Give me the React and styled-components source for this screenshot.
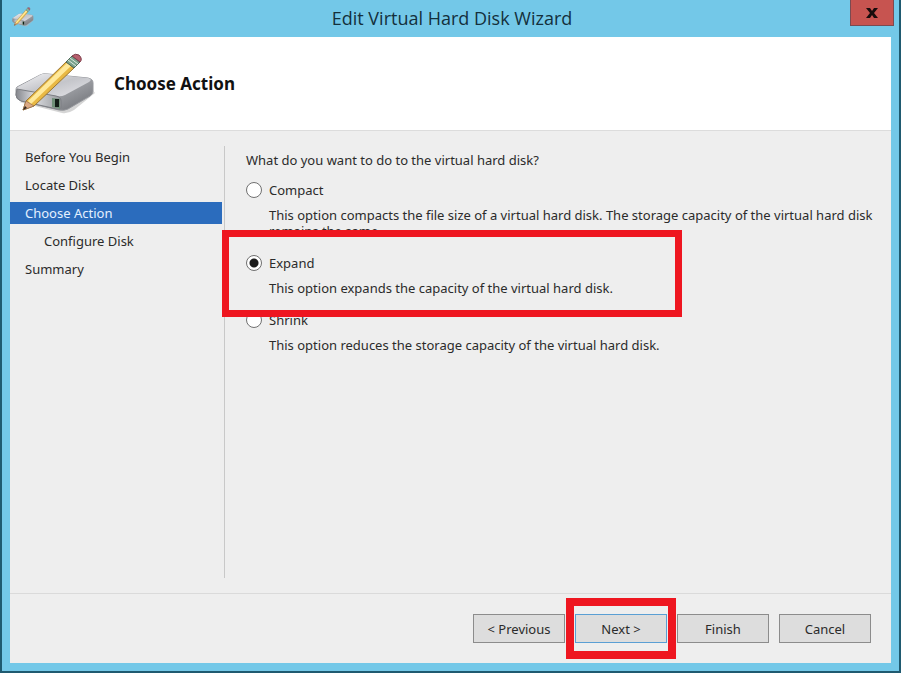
import React, { useState } from 'react';
import styled, { createGlobalStyle } from 'styled-components';

const GlobalStyle = createGlobalStyle`
  *, *::before, *::after {
    box-sizing: border-box;
  }

  body {
    margin: 0;
    font-family: "Noto Sans", sans-serif;
    font-size: 13px;
    line-height: 16px;
    color: #2b2b2b;
  }
`;

const Window = styled.div`
  display: flex;
  flex-direction: column;
  min-height: 100vh;
  padding: 0 8px 8px;
  background: #73c8e8;
  border: solid #1f5a70;
  border-width: 0 2px 2px;
`;

const TitleBar = styled.header`
  display: grid;
  grid-template-columns: 44px 1fr 44px;
  align-items: start;
  height: 37px;
  margin-right: -3px;
`;

const TitleIcon = styled.span`
  padding: 7px 0 0 2px;
  line-height: 0;
`;

const WindowTitle = styled.h1`
  margin: 0;
  font-family: "Open Sans", "Noto Sans", sans-serif;
  font-size: 18px;
  font-weight: 400;
  line-height: 36px;
  text-align: center;
  color: #14303c;
`;

const CloseButton = styled.button`
  display: flex;
  align-items: center;
  justify-content: center;
  width: 44px;
  height: 26px;
  padding: 0;
  background: #c75450;
  border: 1px solid #7b4a50;
  border-top: none;
`;

const Client = styled.div`
  display: flex;
  flex: 1;
  flex-direction: column;
  background: #eeeeee;
`;

const Banner = styled.div`
  display: flex;
  align-items: center;
  gap: 18px;
  height: 94px;
  padding-left: 4px;
  background: #fff;
  border-bottom: 1px solid #dcdcdc;
`;

const BannerTitle = styled.h2`
  margin: 0;
  font-family: "Noto Sans", sans-serif;
  font-size: 17px;
  font-weight: 700;
  line-height: 24px;
  color: #111;
`;

const Body = styled.div`
  display: flex;
  flex: 1;
  padding: 15px 0;
`;

const Steps = styled.nav`
  display: flex;
  flex-direction: column;
  flex: 0 0 215px;
  gap: 6px;
  padding-right: 2px;
  border-right: 1px solid #c8c8c8;
`;

const Step = styled.a`
  height: 22px;
  padding-left: ${(props) => (props.$nested ? '34px' : '15px')};
  line-height: 22px;
  text-decoration: none;
  color: ${(props) => (props.$active ? '#e4f0ff' : '#2b2b2b')};
  background: ${(props) => (props.$active ? '#2b6cbd' : 'transparent')};
`;

const Content = styled.main`
  flex: 1;
  padding: 6px 16px 0 21px;
`;

const Options = styled.fieldset`
  display: flex;
  flex-direction: column;
  gap: 16px;
  margin: 0;
  padding: 0;
  border: none;
`;

const Question = styled.legend`
  margin-bottom: 14px;
  padding: 0;
`;

const Option = styled.div`
  position: relative;
  display: grid;
  grid-template-columns: 16px 1fr;
  column-gap: 7px;
  row-gap: 9px;
  align-items: center;
`;

const Radio = styled.input`
  appearance: none;
  width: 16px;
  height: 16px;
  margin: 0;
  border: 1px solid #707070;
  border-radius: 50%;
  background: #fff;

  &:checked {
    background: radial-gradient(circle, #1c1c1c 0 4px, #fff 5px);
  }
`;

const Description = styled.p`
  grid-column: 2;
  margin: 0;
`;

const Highlight = styled.span`
  position: absolute;
  z-index: 1;
  inset: ${(props) => props.$inset};
  width: ${(props) => props.$width || 'auto'};
  border: ${(props) => props.$thickness || '8px'} solid #ee1620;
  pointer-events: none;
`;

const Footer = styled.footer`
  display: flex;
  justify-content: flex-end;
  gap: 10px;
  padding: 20px 20px;
  border-top: 1px solid #dadada;
`;

const ButtonSlot = styled.div`
  position: relative;
`;

const Button = styled.button`
  display: block;
  width: 92px;
  height: 29px;
  padding: 0;
  font: inherit;
  color: #2b2b2b;
  background: #dddddd;
  border: 1px solid ${(props) => (props.$primary ? '#5a9fd4' : '#8c8c8c')};
`;

const steps = [
  { label: 'Before You Begin' },
  { label: 'Locate Disk' },
  { label: 'Choose Action', active: true },
  { label: 'Configure Disk', nested: true },
  { label: 'Summary' },
];

const options = [
  {
    id: 'compact',
    label: 'Compact',
    text: 'This option compacts the file size of a virtual hard disk. The storage capacity of the virtual hard disk remains the same.',
  },
  {
    id: 'expand',
    label: 'Expand',
    text: 'This option expands the capacity of the virtual hard disk.',
    highlighted: true,
  },
  {
    id: 'shrink',
    label: 'Shrink',
    text: 'This option reduces the storage capacity of the virtual hard disk.',
  },
];

const DiskIcon = ({ width, height }) => (
  <svg width={width} height={height} viewBox="0 0 82 62" preserveAspectRatio="none" aria-hidden="true">
    <defs>
      <linearGradient id="diskTop" x1="0" y1="0" x2="1" y2="1">
        <stop offset="0" stopColor="#f4f4f6" />
        <stop offset="0.5" stopColor="#c4c5ca" />
        <stop offset="1" stopColor="#e6e6ea" />
      </linearGradient>
      <linearGradient id="diskSide" x1="0" y1="0" x2="1" y2="1">
        <stop offset="0" stopColor="#ededf0" />
        <stop offset="0.5" stopColor="#a2a4a9" />
        <stop offset="1" stopColor="#6a6c71" />
      </linearGradient>
      <linearGradient id="diskFront" x1="0" y1="0" x2="1" y2="0">
        <stop offset="0" stopColor="#85878d" />
        <stop offset="0.4" stopColor="#dcdde1" />
        <stop offset="1" stopColor="#96999c" />
      </linearGradient>
    </defs>
    <path d="M5 49 L48 60 Q54 61 60 57 L81 40 L76 34 L44 50 Z" fill="#b9b9b9" opacity="0.6" />
    <path d="M3 34 L26 22 Q29 20 34 21 L74 25 Q79 26 79 30 L79 38 Q79 41 76 43 L54 56 Q50 58 45 57 L7 48 Q2 46 2 42 L2 37 Q2 35 3 34 Z" fill="url(#diskSide)" stroke="#96989d" />
    <path d="M4 34 L26 22 Q29 20 34 21 L74 25 Q79 26 75 29 L51 42 Q47 44 42 43 L6 37 Q2 36 4 34 Z" fill="url(#diskTop)" />
    <path d="M3 36 L42 43 Q47 44 47 48 L47 53 Q47 57 43 56 L7 48 Q2 46 2 42 Z" fill="url(#diskFront)" stroke="#7c7e83" />
    <path d="M38 45 L46 46 L46 56 L38 54 Z" fill="#6f8f78" />
    <path d="M41 46 L45 46 L45 54 L41 54 Z" fill="#111b16" />
    <path d="M12 48 L52 9 L60 15 L20 53 L9 57 Z" fill="#e9b944" stroke="#9b7632" />
    <path d="M14 48 L53 10 L57 13 L17 51 Z" fill="#ffe99b" />
    <path d="M12 48 L20 53 L9 57 Z" fill="#dba984" stroke="#97704f" strokeWidth="0.7" />
    <path d="M11 53 L13 55 L9 57 Z" fill="#33271f" />
    <path d="M52 9 L58 3 L66 9 L60 15 Z" fill="#79a18b" stroke="#4c6555" />
    <path d="M54 7 L62 13 M56 5 L64 11" stroke="#dce9df" strokeWidth="1" />
    <path d="M58 3 Q61 0 65 2 Q69 6 66 9 Z" fill="#b8606e" stroke="#7e3d4a" />
  </svg>
);

const App = () => {
  const [action, setAction] = useState('expand');

  return (
    <>
      <GlobalStyle />
      <Window>
        <TitleBar>
          <TitleIcon>
            <DiskIcon width={22} height={20} />
          </TitleIcon>
          <WindowTitle>Edit Virtual Hard Disk Wizard</WindowTitle>
          <CloseButton aria-label="Close">
            <svg width="12" height="10" viewBox="0 0 12 10" aria-hidden="true">
              <path d="M0 0 H4 L6 3 L8 0 H12 L8 5 L12 10 H8 L6 7 L4 10 H0 L4 5 Z" fill="#180c0c" />
            </svg>
          </CloseButton>
        </TitleBar>
        <Client>
          <Banner>
            <DiskIcon width={82} height={62} />
            <BannerTitle>Choose Action</BannerTitle>
          </Banner>
          <Body>
            <Steps>
              {steps.map((step) => (
                <Step key={step.label} href="#" $active={step.active} $nested={step.nested}>
                  {step.label}
                </Step>
              ))}
            </Steps>
            <Content>
              <Options>
                <Question>What do you want to do to the virtual hard disk?</Question>
                {options.map((option) => (
                  <Option key={option.id}>
                    <Radio
                      type="radio"
                      name="action"
                      id={option.id}
                      checked={action === option.id}
                      onChange={() => setAction(option.id)}
                    />
                    <label htmlFor={option.id}>{option.label}</label>
                    <Description>{option.text}</Description>
                    {option.highlighted && (
                      <Highlight $inset="-25px auto -21px -24px" $width="460px" $thickness="7px" />
                    )}
                  </Option>
                ))}
              </Options>
            </Content>
          </Body>
          <Footer>
            <Button>&lt; Previous</Button>
            <ButtonSlot>
              <Button $primary>Next &gt;</Button>
              <Highlight $inset="-16px -9px" />
            </ButtonSlot>
            <Button>Finish</Button>
            <Button>Cancel</Button>
          </Footer>
        </Client>
      </Window>
    </>
  );
};

export default App;
